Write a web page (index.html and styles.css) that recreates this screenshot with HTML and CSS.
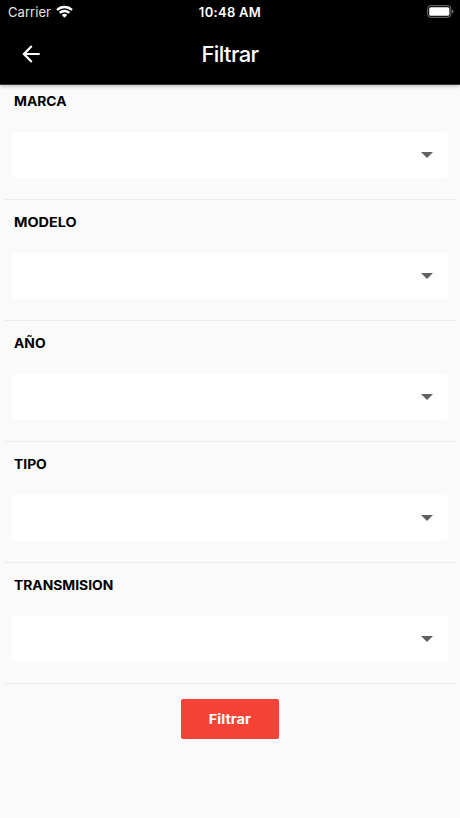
FILE: index.html
```
<!DOCTYPE html>
<html lang="es">
<head>
    <meta charset="UTF-8">
    <meta name="viewport" content="width=device-width, initial-scale=1.0">
    <title>Filtrar</title>
    <link rel="stylesheet" href="styles.css">
</head>
<body>
    <header class="header">
        <div class="status-bar">
            <div class="carrier">
                <span>Carrier</span>
                <svg class="wifi" width="17" height="13" viewBox="0 0 17 13" fill="none" stroke="#fff" stroke-width="2.4">
                    <path d="M1 5a10.8 10.8 0 0 1 15 0"/>
                    <path d="M3.7 7.9a6.9 6.9 0 0 1 9.6 0"/>
                    <path d="M8.5 12.7L5.8 10a3.8 3.8 0 0 1 5.4 0z" fill="#fff" stroke="none"/>
                </svg>
            </div>
            <span class="time">10:48 AM</span>
            <svg class="battery" width="27" height="13" viewBox="0 0 27 13">
                <rect x="0.7" y="0.7" width="23.2" height="11.6" rx="3" fill="none" stroke="#777" stroke-width="1"/>
                <rect x="2.2" y="2.2" width="20.2" height="8.6" rx="1.6" fill="#fff"/>
                <path d="M25 4.4v4.2a2.2 2.2 0 0 0 0-4.2z" fill="#777"/>
            </svg>
        </div>
        <div class="app-bar">
            <svg class="back" width="26" height="26" viewBox="0 0 24 24" fill="#fff">
                <path d="M20 11H7.83l5.59-5.59L12 4l-8 8 8 8 1.41-1.41L7.83 13H20v-2z"/>
            </svg>
            <h1>Filtrar</h1>
        </div>
    </header>

    <main class="filters">
        <section class="filter">
            <h2 class="label">MARCA</h2>
            <div class="select"><span class="arrow"></span></div>
        </section>
        <section class="filter">
            <h2 class="label label-wide">MODELO</h2>
            <div class="select"><span class="arrow"></span></div>
        </section>
        <section class="filter">
            <h2 class="label">AÑO</h2>
            <div class="select"><span class="arrow"></span></div>
        </section>
        <section class="filter">
            <h2 class="label">TIPO</h2>
            <div class="select"><span class="arrow"></span></div>
        </section>
        <section class="filter">
            <h2 class="label">TRANSMISION</h2>
            <div class="select"><span class="arrow"></span></div>
        </section>
        <button class="submit"><span class="submit-text">Filtrar</span></button>
    </main>
</body>
</html>
```
FILE: styles.css
```
* {
    box-sizing: border-box;
}

body {
    margin: 0;
    min-height: 100vh;
    background: #fafafa;
    color: #000;
    font-family: Inter, 'Liberation Sans', sans-serif;
}

.header {
    height: 85px;
    background: #000;
    border-bottom: 1px solid #3a383a;
    color: #fff;
    box-shadow: 0 1px 4px rgba(0, 0, 0, 0.28);
}

.status-bar {
    display: grid;
    grid-template-columns: 1fr auto 1fr;
    align-items: center;
    height: 24px;
    padding: 0 6px 0 8px;
    font-size: 13px;
}

.carrier {
    display: flex;
    align-items: center;
    gap: 5px;
    letter-spacing: 0.05px;
    color: #e4e4e4;
}

.wifi {
    margin-top: -2px;
}

.time {
    margin-right: 2px;
    font-weight: 600;
    letter-spacing: 0.3px;
}

.battery {
    justify-self: end;
    margin-top: -1px;
}

.app-bar {
    display: grid;
    grid-template-columns: 1fr auto 1fr;
    align-items: center;
    height: 60px;
    padding: 0 18px;
}

h1 {
    margin: 0;
    font-size: 22px;
    font-weight: 500;
    line-height: 26px;
    letter-spacing: -0.6px;
}

.filters {
    display: flex;
    flex-direction: column;
    padding: 0 4px;
}

.filter {
    height: 121px;
    padding: 14px 8px 0;
    border-bottom: 1px solid #ececec;
}

.filter:first-child {
    height: 115px;
    padding-top: 8px;
}

.label {
    width: max-content;
    margin: 0 0 23px 2px;
    height: 16px;
    font-size: 13px;
    font-weight: 700;
    line-height: 16px;
    transform: scaleX(1.065);
    transform-origin: left;
}

.label-wide {
    transform: scaleX(1.11);
}

.select {
    display: flex;
    align-items: center;
    justify-content: flex-end;
    height: 46px;
    padding-right: 15px;
    border-radius: 4px;
    background: #fff;
}

/* flecha del desplegable */
.arrow {
    border: 6px solid transparent;
    border-top-color: #616161;
    border-bottom: 0;
}

.submit {
    align-self: center;
    width: 98px;
    height: 40px;
    margin-top: 15px;
    padding: 0;
    border: 0;
    border-radius: 2px;
    background: #f44336;
    color: #fff;
    font-family: inherit;
    font-size: 13px;
    font-weight: 700;
}

.submit-text {
    display: inline-block;
    transform: scaleX(1.12);
}
```
